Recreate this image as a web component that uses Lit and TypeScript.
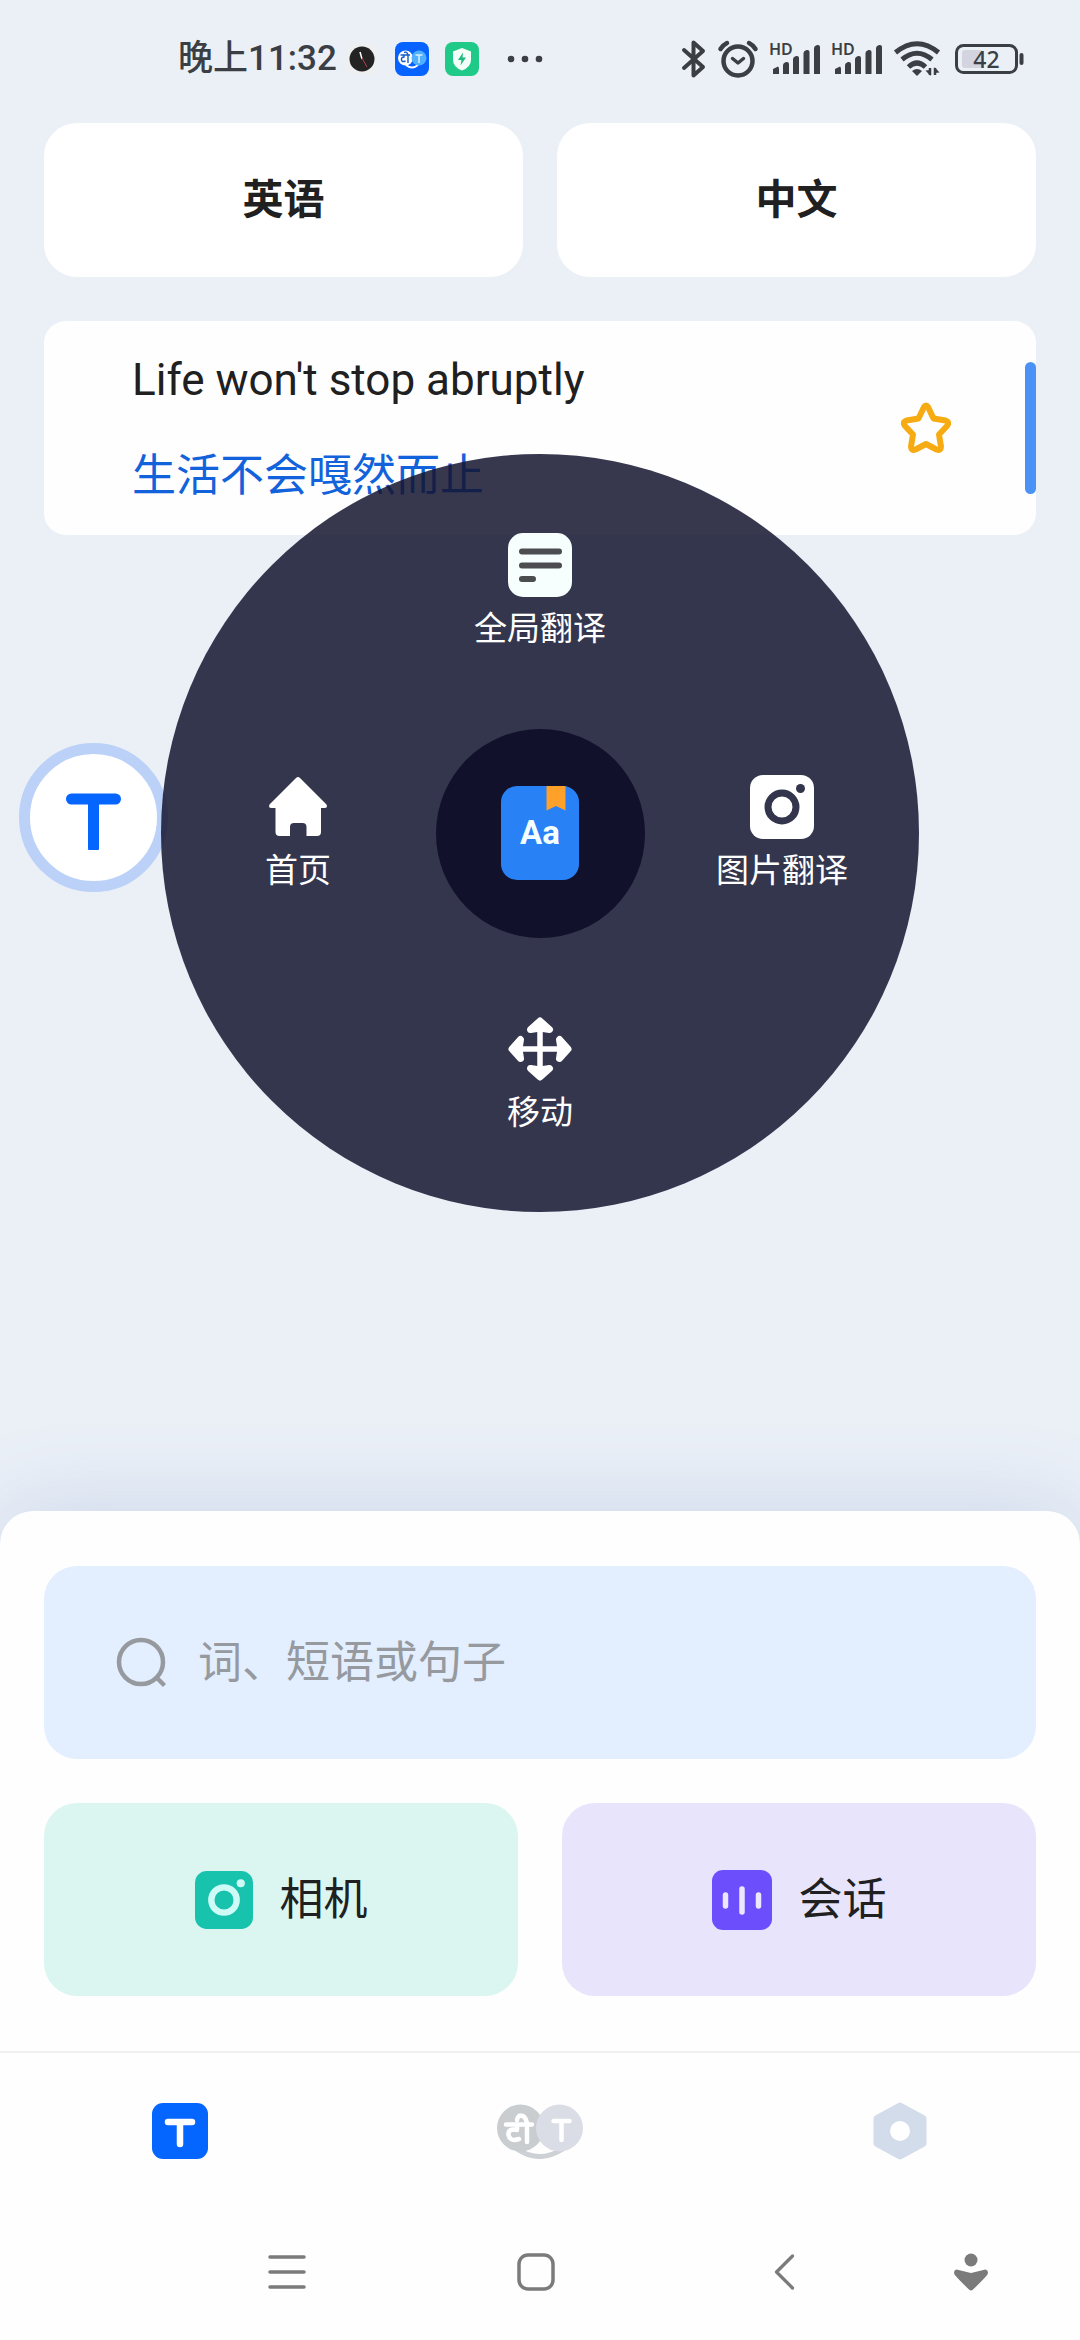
import { LitElement, html, css, svg } from "lit";
import { customElement } from "lit/decorators.js";

const signal = html`<svg class="icon" width="50" height="36" viewBox="0 0 50 36" aria-hidden="true">
  <text x="-1" y="14" font-family="'Noto Sans', sans-serif" font-size="16" font-weight="600" fill="#3b3f44">HD</text>
  <g fill="#3b3f44">
    <path d="M3 33V28L8 25.500Q9 26 9 28V33Z" />
    <path d="M13 33V24Q13 22 16 21Q19 20.500 19 23V33Z" />
    <path d="M23 33V18Q23 16 26 15Q29 14.500 29 17V33Z" />
    <path d="M33.500 33V12Q33.500 10 36.500 9Q39.500 8.500 39.500 11V33Z" />
    <path d="M44 33V7Q44 5 47 4Q50 3.500 50 6V33Z" />
  </g>
</svg>`;

const camera = (body: string, ring: string, inner: string) => svg`
  <rect width="64" height="64" rx="13" fill=${body} />
  <circle cx="32" cy="32" r="14" fill=${inner} stroke=${ring} stroke-width="7" />
  <circle cx="50.500" cy="13.500" r="4.500" fill=${ring} />`;

@customElement("status-bar")
export class StatusBar extends LitElement {
  static styles = css`
    :host { display: block; }
    .bar {
      display: flex;
      align-items: center;
      justify-content: space-between;
      height: 118px;
      padding: 0 56px 0 178px;
      box-sizing: border-box;
      color: #3b3f44;
    }
    .left, .right, .notices { display: flex; align-items: center; }
    .left { gap: 8px; }
    .notices { gap: 16px; }
    .right { gap: 12px; }
    .time { font-size: 35px; line-height: 40px; font-weight: 500; white-space: nowrap; }
    .icon { display: block; flex: none; overflow: visible; }
    .more { margin-left: 12px; }
  `;

  render() {
    return html`<div class="bar">
      <div class="left">
        <time class="time">晚上11:32</time>
        <div class="notices">
          <svg class="icon" width="34" height="34" viewBox="0 0 34 34" aria-hidden="true">
            <rect x="1" y="1" width="32" height="32" rx="8" fill="#eeeff1" />
            <circle cx="17" cy="17" r="12.500" fill="#232323" />
            <path d="M17 17L15 10" stroke="#fff" stroke-width="1.500" />
            <path d="M17 16L22 25" stroke="#b04050" stroke-width="1" />
          </svg>
          <svg class="icon" width="34" height="34" viewBox="0 0 34 34" aria-hidden="true">
            <rect width="34" height="34" rx="8" fill="#0763ff" />
            <path d="M11 23Q17 28 23 23" fill="none" stroke="#fff" stroke-width="1.800" />
            <circle cx="10.500" cy="16" r="7.500" fill="#fff" />
            <circle cx="24" cy="16" r="7.500" fill="#4fb0ff" />
            <path d="M5.500 13H15M13 13V21M13 13Q12 9 9 10.500M9 13V15Q6 15 6.500 18Q7 20.500 10.500 19" fill="none" stroke="#145cc8" stroke-width="1.400" />
            <path d="M20.500 13H27.500M24 13V21" stroke="#d8efff" stroke-width="1.500" />
          </svg>
          <svg class="icon" width="34" height="34" viewBox="0 0 34 34" aria-hidden="true">
            <rect width="34" height="34" rx="8" fill="#1fca88" />
            <path d="M17 6L26 9.500V18Q26 25 17 28.500Q8 25 8 18V9.500Z" fill="#f4fffa" />
            <path d="M18 10.500L13 18H16.500L15.500 23.500L21 15.500H17.500Z" fill="#1fba7d" />
          </svg>
          <svg class="icon more" width="36" height="8" viewBox="0 0 36 8" fill="#3b3f44" aria-hidden="true">
            <circle cx="4" cy="4" r="3.300" /><circle cx="18" cy="4" r="3.300" /><circle cx="32" cy="4" r="3.300" />
          </svg>
        </div>
      </div>
      <div class="right">
        <svg class="icon" width="24" height="40" viewBox="0 0 24 40" fill="none" stroke="#3b3f44" stroke-width="4" stroke-linejoin="round" stroke-linecap="round" aria-hidden="true">
          <path d="M2 11L21 28L11.500 36.500V3.500L21 12L2 29" />
        </svg>
        <svg class="icon" width="40" height="38" viewBox="0 0 40 38" fill="none" stroke="#3b3f44" stroke-width="4.500" stroke-linecap="round" aria-hidden="true">
          <circle cx="20" cy="21" r="14.500" />
          <path d="M14.500 18.500L20 23L25.500 18.500" stroke-linejoin="round" stroke-width="3.500" />
          <path d="M2.500 9Q5 5 9 3M31 3Q35 5 37.500 9" />
        </svg>
        ${signal} ${signal}
        <svg class="icon" width="49" height="36" viewBox="0 0 49 36" fill="none" stroke="#3b3f44" stroke-width="5" aria-hidden="true">
          <path d="M1.500 11.500Q23 -6 44.500 11.500" />
          <path d="M8 18.500Q23 6 38 18.500" />
          <path d="M14.500 26Q23 18 31.500 26" />
          <path d="M18 30Q23 26 28 30L23 35Z" fill="#3b3f44" stroke="none" />
          <path d="M36 27V34M41 34V27" stroke-width="2.500" />
          <path d="M31.500 29.500L36.500 35V29ZM45.500 31.500L40.500 26V32Z" fill="#3b3f44" stroke="none" />
        </svg>
        <svg class="icon" width="69" height="30" viewBox="0 0 69 30" aria-hidden="true">
          <rect x="1.500" y="1.500" width="60" height="27" rx="7" fill="none" stroke="#3b3f44" stroke-width="3" />
          <rect x="7" y="6" width="21" height="18" rx="3" fill="#d3d4df" />
          <path d="M66.500 11V19" stroke="#3b3f44" stroke-width="4" stroke-linecap="round" />
          <text x="31.500" y="24" text-anchor="middle" font-family="'Noto Sans', sans-serif" font-size="23" font-weight="500" fill="#3b3f44">42</text>
        </svg>
      </div>
    </div>`;
  }
}

@customElement("radial-menu")
export class RadialMenu extends LitElement {
  static styles = css`
    :host { display: block; }
    .disc {
      display: grid;
      grid-template-columns: repeat(3, 242px);
      grid-template-rows: repeat(3, 242px);
      place-content: center;
      place-items: center;
      width: 758px;
      height: 758px;
      border-radius: 50%;
      background: rgba(20, 21, 47, 0.85);
    }
    .item {
      display: flex;
      flex-direction: column;
      align-items: center;
      gap: 12px;
      padding: 0;
      border: 0;
      background: none;
      color: #fff;
      font: inherit;
      font-size: 33px;
      line-height: 40px;
      white-space: nowrap;
    }
    .up { grid-area: 1 / 2; }
    .left { grid-area: 2 / 1; }
    .core { grid-area: 2 / 2; }
    .right { grid-area: 2 / 3; }
    .down { grid-area: 3 / 2; }
    .core {
      display: grid;
      place-items: center;
      width: 209px;
      height: 209px;
      padding: 0;
      border: 0;
      border-radius: 50%;
      background: #12112b;
    }
    .icon { display: block; }
  `;

  render() {
    return html`<nav class="disc" aria-label="快捷菜单">
      <button class="item up">
        <svg class="icon" width="64" height="64" viewBox="0 0 64 64" aria-hidden="true">
          <rect width="64" height="64" rx="15" fill="#f6fffe" />
          <path d="M14 18.500H51M14 32.500H51M14 46H25" stroke="#4b4d50" stroke-width="6" stroke-linecap="round" />
        </svg>
        全局翻译
      </button>
      <button class="item left">
        <svg class="icon" width="64" height="64" viewBox="0 0 64 64" fill="#fff" aria-hidden="true">
          <path d="M30 3Q32 1 34 3L60.500 29.500Q62 33 58.500 33H55V57Q55 61 51 61H40.500V52Q40.500 48 36.500 48H28Q24 48 24 52V61H13.500Q9.500 61 9.500 57V33H5.500Q2 33 3.500 29.500Z" />
        </svg>
        首页
      </button>
      <button class="core" aria-label="词典">
        <svg class="icon" width="78" height="94" viewBox="0 0 78 94" aria-hidden="true">
          <rect width="78" height="94" rx="16" fill="#2881f5" />
          <path d="M45.500 0H64.500V24.500L55 20L45.500 24.500Z" fill="#ffa02b" />
          <text x="39" y="58" text-anchor="middle" font-family="Roboto, sans-serif" font-size="33" font-weight="700" fill="#f4ffff">Aa</text>
        </svg>
      </button>
      <button class="item right">
        <svg class="icon" width="64" height="64" viewBox="0 0 64 64" aria-hidden="true">${camera("#ffffff", "#33354c", "#ffffff")}</svg>
        图片翻译
      </button>
      <button class="item down">
        <svg class="icon" width="64" height="64" viewBox="0 0 64 64" fill="#fff" stroke="#fff" aria-hidden="true">
          <path d="M32 10V54M10 32H54" stroke-width="5.500" />
          <g stroke-width="7" stroke-linejoin="round">
            <path d="M32 4L41.500 12.500L32 11L22.500 12.500Z" />
            <path d="M32 60L41.500 51.500L32 53L22.500 51.500Z" />
            <path d="M4 32L12.500 22.500L11 32L12.500 41.500Z" />
            <path d="M60 32L51.500 22.500L53 32L51.500 41.500Z" />
          </g>
        </svg>
        移动
      </button>
    </nav>`;
  }
}

@customElement("app-root")
export class AppRoot extends LitElement {
  static styles = css`
    :host {
      display: block;
      font-family: Roboto, "Noto Sans CJK SC", sans-serif;
      color: #202020;
    }
    .page {
      position: relative;
      display: flex;
      flex-direction: column;
      min-height: 100vh;
      background: #ebf0f7;
      overflow: hidden;
    }
    button { margin: 0; border: 0; font: inherit; color: inherit; }
    .icon { display: block; flex: none; }
    .status { margin-bottom: 5px; }
    .languages {
      display: grid;
      grid-template-columns: 1fr 1fr;
      gap: 34px;
      padding: 0 44px;
    }
    .language {
      height: 154px;
      padding: 0;
      border-radius: 33px;
      background: #fff;
      font-size: 41px;
      line-height: 60px;
      font-weight: 700;
    }
    .card {
      display: flex;
      align-items: center;
      margin: 44px 44px 0;
      padding-left: 88px;
      height: 214px;
      border-radius: 22px;
      background: #fefefe;
    }
    .phrase {
      display: flex;
      flex-direction: column;
      flex: 1;
      gap: 36px;
      margin: 0;
      font-size: 44px;
      line-height: 60px;
    }
    .phrase p { margin: 0; }
    .phrase .translation { color: #1262dc; }
    .star { margin-right: 72px; padding: 0; background: none; }
    .thumb {
      width: 11px;
      height: 132px;
      border-radius: 6px;
      background: #4b92f6;
    }
    .bubble {
      position: absolute;
      top: 743px;
      left: 19px;
      width: 149px;
      height: 149px;
      padding: 0;
      border: 11px solid #bcd1f8;
      border-radius: 50%;
      background: #fff;
      display: grid;
      place-items: center;
      box-sizing: border-box;
    }
    .menu {
      position: absolute;
      top: 454px;
      left: 50%;
      transform: translateX(-50%);
    }
    .sheet {
      display: grid;
      grid-template-columns: 1fr 1fr;
      gap: 44px;
      margin-top: auto;
      padding: 55px 44px;
      border-radius: 33px 33px 0 0;
      background: #fefefe;
      box-shadow: 0 0 88px rgba(80, 120, 190, 0.22);
    }
    .search {
      grid-column: 1 / -1;
      display: flex;
      align-items: center;
      gap: 30px;
      height: 193px;
      padding: 0 72px;
      box-sizing: border-box;
      border-radius: 33px;
      background: #e3eeff;
    }
    .field {
      flex: 1;
      min-width: 0;
      padding: 0;
      border: 0;
      outline: 0;
      background: none;
      font: inherit;
      font-size: 44px;
      line-height: 60px;
      color: #202020;
    }
    .field::placeholder { color: #969a9f; opacity: 1; }
    .action {
      display: flex;
      align-items: center;
      justify-content: center;
      gap: 27px;
      height: 193px;
      padding: 0;
      border-radius: 33px;
      font-size: 44px;
      line-height: 60px;
    }
    .camera { background: #dbf6f0; }
    .talk { background: #e8e4fc; }
    .tabs {
      display: grid;
      grid-template-columns: repeat(3, 1fr);
      height: 155px;
      border-top: 2px solid #f0f0f2;
      background: #fefefe;
    }
    .tab, .key {
      display: grid;
      place-items: center;
      padding: 0;
      background: none;
    }
    .keys {
      display: grid;
      grid-template-columns: 2fr 2fr 2fr 1fr;
      height: 132px;
      padding: 0 47px 4px 163px;
      box-sizing: border-box;
      background: #fefefe;
    }
  `;

  render() {
    return html`<main class="page">
      <status-bar class="status"></status-bar>
      <div class="languages">
        <button class="language">英语</button>
        <button class="language">中文</button>
      </div>
      <section class="card">
        <div class="phrase">
          <p>Life won't stop abruptly</p>
          <p class="translation">生活不会嘎然而止</p>
        </div>
        <button class="star" aria-label="收藏">
          <svg class="icon" width="54" height="54" viewBox="0 0 54 54" aria-hidden="true">
            <path d="M25 6Q27 3 29 6L34.500 17.500L46.500 19.500Q51 21 48 25L40 33.500L42 45.500Q42 50 37.500 48.500L27 43L16.500 48.500Q12 50 12 45.500L14 33.500L6 25Q3 21 7.500 19.500L19.500 17.500Z" fill="none" stroke="#f6ab13" stroke-width="6" stroke-linejoin="round" />
          </svg>
        </button>
        <div class="thumb"></div>
      </section>

      <section class="sheet">
        <label class="search">
          <svg class="icon" width="52" height="52" viewBox="0 0 52 52" fill="none" stroke="#969a9f" stroke-width="4.500" aria-hidden="true">
            <circle cx="25" cy="25" r="22" />
            <path d="M40.500 40.500L48.500 48.500" />
          </svg>
          <input class="field" type="text" placeholder="词、短语或句子" aria-label="词、短语或句子" />
        </label>
        <button class="action camera">
          <svg class="icon" width="58" height="58" viewBox="0 0 64 64" aria-hidden="true">${camera("#18c3ae", "#cffbf6", "#18c3ae")}</svg>
          相机
        </button>
        <button class="action talk">
          <svg class="icon" width="60" height="60" viewBox="0 0 60 60" aria-hidden="true">
            <rect width="60" height="60" rx="11" fill="#6c4efc" />
            <path d="M13.500 25V36M30 19V42M46.500 25V36" stroke="#ece6ff" stroke-width="5.500" stroke-linecap="round" />
          </svg>
          会话
        </button>
      </section>

      <nav class="tabs" aria-label="主导航">
        <button class="tab" aria-label="翻译">
          <svg class="icon" width="56" height="56" viewBox="0 0 56 56" aria-hidden="true">
            <rect width="56" height="56" rx="11" fill="#0565ff" />
            <path d="M16 19H40M28 19V41" stroke="#fff" stroke-width="6.500" stroke-linecap="round" />
          </svg>
        </button>
        <button class="tab" aria-label="语言">
          <svg class="icon" width="86" height="56" viewBox="0 0 86 56" aria-hidden="true">
            <path d="M20 46Q42 61 66 46" fill="none" stroke="#cdd1d5" stroke-width="5" />
            <circle cx="23.500" cy="25" r="23.500" fill="#c9cdd0" />
            <circle cx="62.500" cy="25" r="23.500" fill="#dadde5" />
            <path d="M9 21.500H35M30 20V39M30 20Q28 11 22 13Q20 15 20 17M20 22V27Q11 25 11.500 32Q13 39 22 36" fill="none" stroke="#fff" stroke-width="4.500" stroke-linecap="round" stroke-linejoin="round" />
            <path d="M56.500 18H72.500M64.500 18V37" stroke="#fff" stroke-width="4.500" stroke-linecap="round" />
          </svg>
        </button>
        <button class="tab" aria-label="设置">
          <svg class="icon" width="54" height="58" viewBox="0 0 54 58" aria-hidden="true">
            <path d="M27 4L50 16.500V41.500L27 54L4 41.500V16.500Z" fill="#d2dcea" stroke="#d2dcea" stroke-width="7" stroke-linejoin="round" />
            <circle cx="27" cy="29" r="10" fill="#fff" />
          </svg>
        </button>
      </nav>
      <nav class="keys" aria-label="系统导航">
        <button class="key" aria-label="最近任务">
          <svg class="icon" width="40" height="40" viewBox="0 0 40 40" stroke="#7b7b7b" stroke-width="3.500" stroke-linecap="round" aria-hidden="true">
            <path d="M3 5H37M3 20H37M3 35H37" />
          </svg>
        </button>
        <button class="key" aria-label="主屏幕">
          <svg class="icon" width="40" height="40" viewBox="0 0 40 40" aria-hidden="true">
            <rect x="3" y="3" width="34" height="34" rx="9" fill="none" stroke="#7b7b7b" stroke-width="3.500" />
          </svg>
        </button>
        <button class="key" aria-label="返回">
          <svg class="icon" width="40" height="40" viewBox="0 0 40 40" fill="none" stroke="#7b7b7b" stroke-width="3.200" stroke-linecap="round" stroke-linejoin="round" aria-hidden="true">
            <path d="M28.500 4L12.500 20L28.500 36" />
          </svg>
        </button>
        <button class="key" aria-label="无障碍">
          <svg class="icon" width="40" height="40" viewBox="0 0 40 40" fill="#7b7b7b" aria-hidden="true">
            <circle cx="20" cy="8" r="6.500" />
            <path d="M5.500 17.500L20 21L34.500 17.500Q38 18.500 36.500 22.500Q33 27 22 37.500Q20 39.500 18 37.500Q7 27 3.500 22.500Q2 18.500 5.500 17.500Z" />
          </svg>
        </button>
      </nav>

      <button class="bubble" aria-label="悬浮翻译">
        <svg class="icon" width="64" height="64" viewBox="0 0 64 64" aria-hidden="true">
          <path d="M9.500 13H53.500M31.500 13V62" stroke="#0565ff" stroke-width="11" stroke-linecap="round" />
        </svg>
      </button>
      <radial-menu class="menu"></radial-menu>
    </main>`;
  }
}
